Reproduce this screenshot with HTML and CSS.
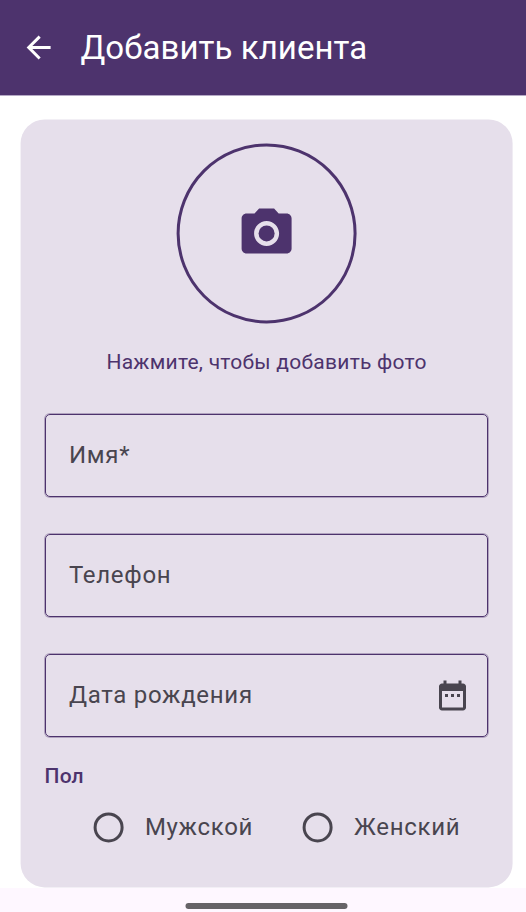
FILE: index.html
```html
<!DOCTYPE html>
<html lang="ru">
<head>
<meta charset="utf-8">
<title>Добавить клиента</title>
<link rel="stylesheet" href="styles.css">
</head>
<body>
<header class="appbar">
  <svg class="back" viewBox="0 0 24 24"><path d="M20 11H7.83l5.59-5.59L12 4l-8 8 8 8 1.41-1.41L7.83 13H20v-2z"/></svg>
  <h1 class="title">Добавить клиента</h1>
</header>
<main class="content">
  <form class="card">
    <div class="photo">
      <svg class="camera" viewBox="0 0 24 24"><circle cx="12" cy="12" r="3.2"/><path d="M9 2L7.17 4H4c-1.1 0-2 .9-2 2v12c0 1.1.9 2 2 2h16c1.1 0 2-.9 2-2V6c0-1.1-.9-2-2-2h-3.17L15 2H9zm3 15c-2.76 0-5-2.24-5-5s2.24-5 5-5 5 2.24 5 5-2.24 5-5 5z"/></svg>
    </div>
    <p class="hint">Нажмите, чтобы добавить фото</p>
    <div class="field"><span>Имя*</span></div>
    <div class="field"><span>Телефон</span></div>
    <div class="field"><span>Дата рождения</span>
      <svg class="calendar" viewBox="0 0 24 24"><path d="M9 11H7v2h2v-2zm4 0h-2v2h2v-2zm4 0h-2v2h2v-2zm2-7h-1V2h-2v2H8V2H6v2H5c-1.11 0-1.99.9-1.99 2L3 20c0 1.1.89 2 2 2h14c1.1 0 2-.9 2-2V6c0-1.1-.9-2-2-2zm0 16H5V9h14v11z"/></svg>
    </div>
    <h2 class="label">Пол</h2>
    <div class="options">
      <div class="option"><i class="radio"></i><span>Мужской</span></div>
      <div class="option"><i class="radio"></i><span>Женский</span></div>
    </div>
  </form>
</main>
<footer class="navbar"><div class="handle"></div></footer>
</body>
</html>
```
FILE: styles.css
```css
* { box-sizing: border-box; }
body {
  margin: 0;
  height: 912px;
  display: flex;
  flex-direction: column;
  overflow: hidden;
  background: #fff;
  color: #49454f;
  font-family: Roboto, sans-serif;
}
.appbar {
  height: 96px;
  flex: none;
  display: flex;
  align-items: center;
  padding-left: 20px;
  background: #4d336d;
  color: #fff;
  border-bottom: 1px solid #b5a9c5;
}
.back { width: 36px; height: 36px; fill: #fff; transform: translate(.6px, -.4px); }
.title { margin: 0 0 0 24.5px; font-size: 33px; line-height: 42px; font-weight: 400; letter-spacing: .06px; }
.content { height: 792px; flex: none; padding: 24px 13px 0 21px; }
.card {
  height: 768px;
  padding: 24px;
  border-radius: 24px;
  background: #e6dfeb;
  transform: translate(-.4px, -.6px);
}
.photo {
  width: 180px;
  height: 180px;
  margin: 0 auto;
  display: flex;
  align-items: center;
  justify-content: center;
  border: 3px solid #4d336d;
  border-radius: 50%;
}
.camera { width: 60px; height: 60px; fill: #4d336d; }
.hint {
  margin: 24px 0 36px;
  text-align: center;
  color: #4d336d;
  font-size: 21px;
  line-height: 30px;
  letter-spacing: .25px;
}
.field {
  height: 83px;
  margin: 0 1px 37px 0;
  padding: 0 16.5px 0 23px;
  display: flex;
  align-items: center;
  justify-content: space-between;
  border: 1px solid #4d336d;
  box-shadow: 0 0 0 1px rgba(77, 51, 109, .35);
  border-radius: 5px;
  font-size: 24px;
  letter-spacing: .7px;
  transform: translate(.4px, .6px);
}
.field span { transform: translate(0, -.6px); }
.calendar { width: 36px; height: 36px; fill: #49454f; transform: translate(-.5px, -.5px); }
.label {
  margin: -12px 0 0;
  color: #4d336d;
  font-size: 21px;
  line-height: 30px;
  font-weight: 500;
  letter-spacing: .15px;
}
.options {
  height: 72px;
  display: flex;
  justify-content: center;
  align-items: center;
  gap: 49.5px;
  padding-left: 20.5px;
  font-size: 24px;
  letter-spacing: .7px;
}
.option { display: flex; align-items: center; gap: 21.5px; }
.radio { width: 30px; height: 30px; border: 3px solid #49454f; border-radius: 50%; }
.navbar {
  flex: 1;
  display: flex;
  justify-content: center;
  padding: 14.5px 0 0 7px;
  background: #fef7ff;
}
.handle { width: 162px; height: 6px; border-radius: 3px; background: #666367; transform: translateX(-.5px); }
```
